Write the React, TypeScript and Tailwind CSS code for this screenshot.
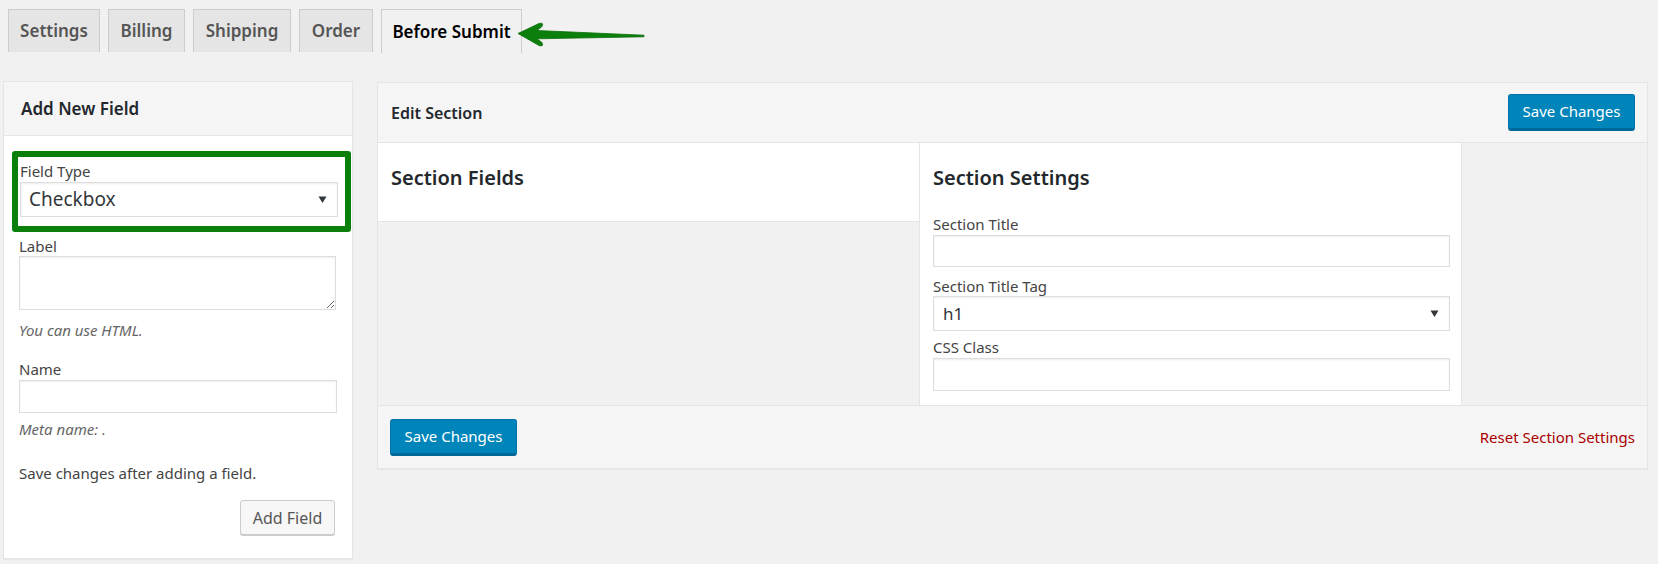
import React from "react";

const font = "font-['Noto_Sans','Open_Sans',sans-serif]";

const tabs = [
  { label: "Settings", w: "w-[92px]" },
  { label: "Billing", w: "w-[77px]" },
  { label: "Shipping", w: "w-[98px]" },
  { label: "Order", w: "w-[74px]" },
];

function Caret() {
  return (
    <svg width="9" height="9" viewBox="0 0 9 9" className="shrink-0">
      <path d="M0.5 1.5 H8.5 L4.5 8 Z" fill="#32373c" />
    </svg>
  );
}

function FakeSelect({ value, big }: { value: string; big?: boolean }) {
  return (
    <div
      className={`flex items-center justify-between bg-white border border-[#dddddd] shadow-[inset_0_1px_2px_rgba(0,0,0,0.07)] pr-[10px] ${
        big ? "h-[35px] pl-[8px] text-[19px]" : "h-[35px] pl-[9px] text-[17px]"
      } text-[#32373c]`}
    >
      <span>{value}</span>
      <Caret />
    </div>
  );
}

function TextInput({ className = "" }: { className?: string }) {
  return (
    <input
      readOnly
      className={`block w-full bg-white border border-[#dddddd] shadow-[inset_0_1px_2px_rgba(0,0,0,0.07)] outline-none ${className}`}
    />
  );
}

function BlueButton() {
  return (
    <button className="h-[37px] w-[127px] rounded-[3px] bg-[#0085ba] border border-[#0073aa] border-b-[3px] border-b-[#006799] text-white text-[15px] leading-none">
      Save Changes
    </button>
  );
}

export default function App() {
  return (
    <div className={`w-[1658px] h-[564px] bg-[#f1f1f1] overflow-hidden ${font}`}>
      {/* Tabs */}
      <div className="relative flex gap-[8px] pl-[8px] pt-[9px]">
        {tabs.map((t) => (
          <div
            key={t.label}
            className={`${t.w} h-[43px] flex items-center justify-center bg-[#e5e5e5] border border-[#cccccc] border-b-0 text-[#555555] text-[17px] font-semibold`}
          >
            {t.label}
          </div>
        ))}
        <div className="w-[141px] h-[44px] flex items-center justify-center bg-[#f1f1f1] border border-[#cccccc] border-b-0 text-black text-[17px] font-semibold">
          Before Submit
        </div>
        {/* annotation arrow */}
        <svg
          width="134"
          height="32"
          viewBox="0 0 134 32"
          className="absolute left-[514px] top-[20px]"
        >
          <path
            d="M4 13.5 L25 3.5 Q30 2 28 6.5 L23 10.5 L130 15.2 L130 16.8 L23 18.8 L28 22.5 Q30 27 25 25.5 Z"
            fill="#0b7f0b"
            stroke="#0a6d0a"
            strokeWidth="0.8"
            strokeLinejoin="round"
          />
        </svg>
      </div>

      {/* Content */}
      <div className="flex items-start gap-[24px] pl-[3px] mt-[28px]">
        {/* Add New Field */}
        <div className="w-[350px] h-[478px] bg-white border border-[#e5e5e5] shadow-[0_1px_1px_rgba(0,0,0,0.04)] shrink-0">
          <div className="h-[54px] bg-[#f5f5f5] border-b border-[#e5e5e5] flex items-center pl-[17px] text-[17px] font-semibold text-[#23282d]">
            Add New Field
          </div>

          <div className="ml-[8px] mr-[1px] mt-[15px] border-[6px] border-[#0a800a] rounded-[3px] pt-[4px] pb-[9px] pl-[2px] pr-[7px]">
            <div className="text-[15px] leading-[20px] text-[#444444]">Field Type</div>
            <div className="mt-[1px]">
              <FakeSelect value="Checkbox" big />
            </div>
          </div>

          <div className="px-[15px] text-[15px] leading-[20px] text-[#444444]">
            <div className="mt-[4px]">Label</div>
            <textarea
              readOnly
              className="block w-[317px] h-[54px] bg-white border border-[#dddddd] shadow-[inset_0_1px_2px_rgba(0,0,0,0.07)] outline-none"
            />
            <div className="mt-[10px] italic text-[#666666]">You can use HTML.</div>
            <div className="mt-[19px]">Name</div>
            <TextInput className="h-[33px] w-[318px] mt-[1px]" />
            <div className="mt-[6px] italic text-[#666666]">Meta name: .</div>
            <div className="mt-[24px]">Save changes after adding a field.</div>
            <div className="flex justify-end mt-[17px] pr-[2px]">
              <button className="h-[35px] w-[95px] rounded-[3px] bg-[#f7f7f7] border border-[#cccccc] shadow-[0_1px_0_#cccccc] text-[#555555] text-[16px]">
                Add Field
              </button>
            </div>
          </div>
        </div>

        {/* Edit Section */}
        <div className="w-[1271px] mt-[1px] bg-[#f1f1f1] border border-[#e5e5e5] shadow-[0_1px_1px_rgba(0,0,0,0.04)]">
          <div className="h-[60px] bg-[#f5f5f5] border-b border-[#e5e5e5] flex items-center justify-between pl-[13px] pr-[12px]">
            <span className="text-[16px] font-semibold text-[#23282d]">Edit Section</span>
            <BlueButton />
          </div>

          <div className="flex items-start">
            <div className="w-[541px] h-[79px] bg-white border-b border-[#e5e5e5] pl-[13px] pt-[21px]">
              <div className="text-[20px] leading-[28px] font-semibold text-[#23282d]">Section Fields</div>
            </div>
            <div className="w-[543px] h-[262px] bg-white border-x border-[#e5e5e5] pl-[13px] pr-[11px] pt-[21px]">
              <div className="text-[20px] leading-[28px] font-semibold text-[#23282d]">Section Settings</div>
              <div className="text-[15px] leading-[20px] text-[#444444]">
                <div className="mt-[22px]">Section Title</div>
                <TextInput className="h-[32px] mt-[1px]" />
                <div className="mt-[9px]">Section Title Tag</div>
                <div className="mt-[0px]">
                  <FakeSelect value="h1" />
                </div>
                <div className="mt-[6px]">CSS Class</div>
                <TextInput className="h-[33px] mt-[1px]" />
              </div>
            </div>
          </div>

          <div className="h-[63px] bg-[#f5f5f5] border-t border-[#e5e5e5] flex items-center justify-between pl-[12px] pr-[12px]">
            <BlueButton />
            <span className="text-[15px] text-[#aa0000]">Reset Section Settings</span>
          </div>
        </div>
      </div>
    </div>
  );
}
